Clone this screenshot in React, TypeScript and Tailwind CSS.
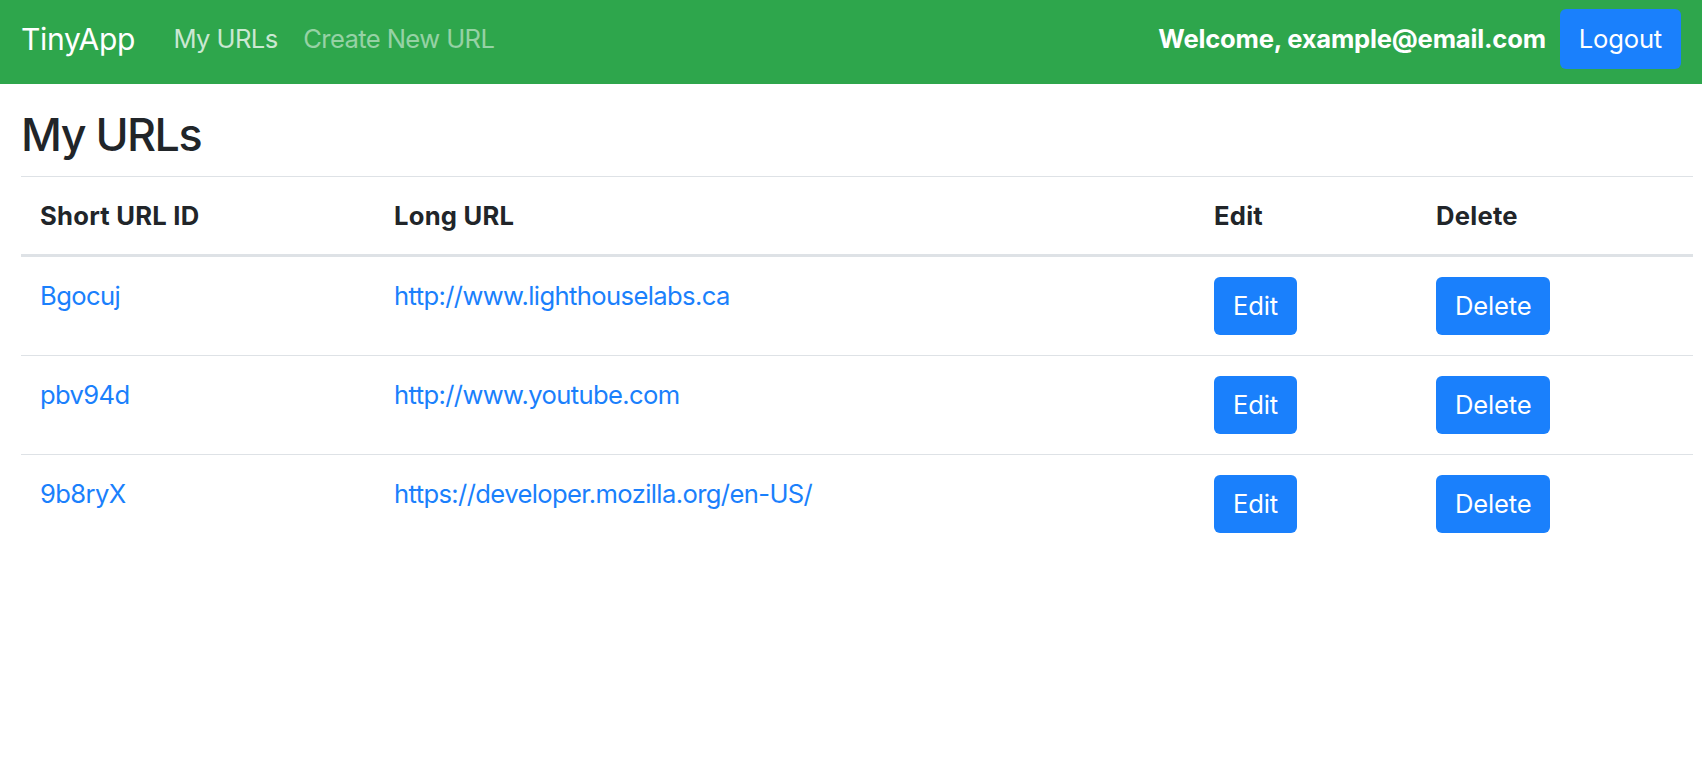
import React from "react";

const rows = [
  { id: "Bgocuj", url: "http://www.lighthouselabs.ca" },
  { id: "pbv94d", url: "http://www.youtube.com" },
  { id: "9b8ryX", url: "https://developer.mozilla.org/en-US/" },
];

export default function App() {
  return (
    <div className="min-h-screen bg-white text-[#212529] font-['Inter','Liberation_Sans',sans-serif]">
      <nav className="h-[84px] bg-[#2ea64c] pl-[21px] pr-[21px] pt-[9px] flex items-start">
        <div className="flex items-center h-[60px] w-full">
          <a className="text-[30px] leading-[48px] text-white mr-[25.6px] tracking-[-0.3px]">TinyApp</a>
          <a className="px-[12.8px] text-[25.6px] leading-[38px] text-white/75 tracking-[-0.6px]">My URLs</a>
          <a className="px-[12.8px] text-[25.6px] leading-[38px] text-white/50 tracking-[-0.6px]">Create New URL</a>
          <div className="ml-auto flex items-center">
            <span className="text-[25.6px] font-bold text-white mr-[14px] tracking-[-0.2px]">
              Welcome, example@email.com
            </span>
            <button className="h-[60px] px-[19px] rounded-[6px] bg-[#1a80fc] text-white text-[25.6px] leading-[38px] tracking-[-0.2px]">
              Logout
            </button>
          </div>
        </div>
      </nav>
      <main className="pl-[21px] pr-[9px]">
        <h3 className="mt-[25px] mb-[12.8px] text-[44.8px] leading-[1.2] font-medium tracking-[-1.5px]">My URLs</h3>
        <table className="w-full table-fixed border-collapse text-[25.6px] leading-[38px] tracking-[-0.62px]">
          <colgroup>
            <col className="w-[354px]" />
            <col className="w-[820px]" />
            <col className="w-[222px]" />
            <col />
          </colgroup>
          <thead>
            <tr className="tracking-[0.25px]">
              <th className="text-left font-bold px-[19px] pt-[20px] pb-[19px] border-t border-t-[#dee2e6] border-b-[3px] border-b-[#dee2e6] align-bottom">Short URL ID</th>
              <th className="text-left font-bold px-[19px] pt-[20px] pb-[19px] border-t border-t-[#dee2e6] border-b-[3px] border-b-[#dee2e6] align-bottom">Long URL</th>
              <th className="text-left font-bold px-[19px] pt-[20px] pb-[19px] border-t border-t-[#dee2e6] border-b-[3px] border-b-[#dee2e6] align-bottom">Edit</th>
              <th className="text-left font-bold px-[19px] pt-[20px] pb-[19px] border-t border-t-[#dee2e6] border-b-[3px] border-b-[#dee2e6] align-bottom">Delete</th>
            </tr>
          </thead>
          <tbody>
            {rows.map((r, i) => (
              <tr key={r.id}>
                <td className={`px-[19px] py-[20px] align-top ${i > 0 ? "border-t border-[#dee2e6]" : ""}`}>
                  <a className="text-[#1a80fc]">{r.id}</a>
                </td>
                <td className={`px-[19px] py-[20px] align-top ${i > 0 ? "border-t border-[#dee2e6]" : ""}`}>
                  <a className="text-[#1a80fc]">{r.url}</a>
                </td>
                <td className={`px-[19px] py-[20px] align-top ${i > 0 ? "border-t border-[#dee2e6]" : ""}`}>
                  <button className="h-[58px] px-[19px] rounded-[6px] bg-[#1a80fc] text-white tracking-[-0.2px]">Edit</button>
                </td>
                <td className={`px-[19px] py-[20px] align-top ${i > 0 ? "border-t border-[#dee2e6]" : ""}`}>
                  <button className="h-[58px] px-[19px] rounded-[6px] bg-[#1a80fc] text-white tracking-[-0.2px]">Delete</button>
                </td>
              </tr>
            ))}
          </tbody>
        </table>
      </main>
    </div>
  );
}
